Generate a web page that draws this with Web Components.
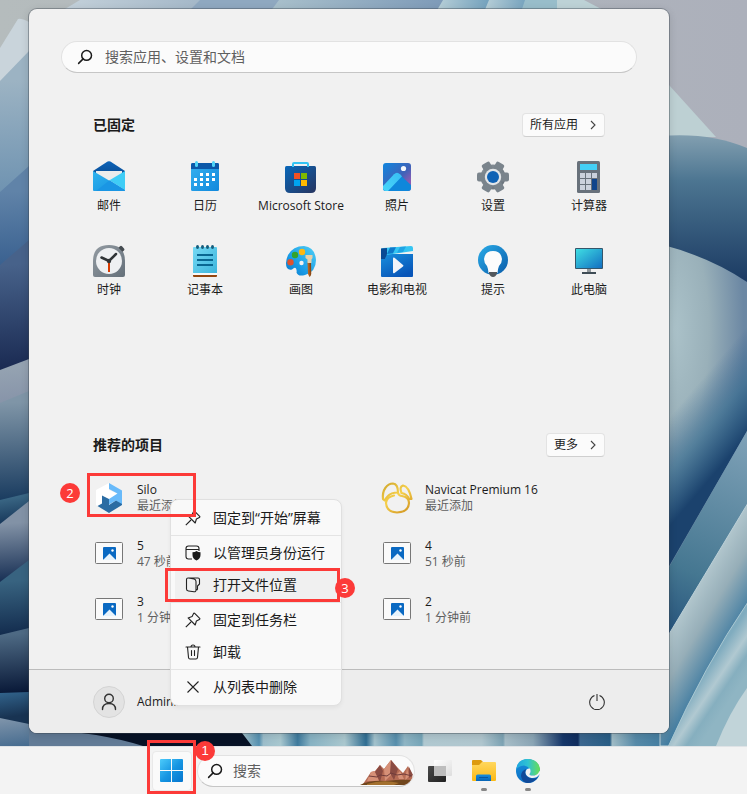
<!DOCTYPE html>
<html lang="zh-CN">
<head>
<meta charset="utf-8">
<meta name="viewport" content="width=device-width, initial-scale=1">
<title>开始</title>
<style>
  body {
    margin: 0;
    font-family: "Open Sans", "Noto Sans CJK SC", sans-serif;
    font-size: 12px;
    line-height: 16px;
    color: #1b1b1b;
  }
</style>
</head>
<body>
<desktop-shell>
  <wall-paper slot="wallpaper"></wall-paper>

  <start-menu>
    <search-box slot="search" label="搜索应用、设置和文档"></search-box>

    <menu-section slot="pinned" heading="已固定" more="所有应用">
      <app-tile icon="mail">邮件</app-tile>
      <app-tile icon="calendar">日历</app-tile>
      <app-tile icon="store">Microsoft Store</app-tile>
      <app-tile icon="photos">照片</app-tile>
      <app-tile icon="settings">设置</app-tile>
      <app-tile icon="calculator">计算器</app-tile>
      <app-tile icon="clock">时钟</app-tile>
      <app-tile icon="notepad">记事本</app-tile>
      <app-tile icon="paint">画图</app-tile>
      <app-tile icon="movies">电影和电视</app-tile>
      <app-tile icon="tips">提示</app-tile>
      <app-tile icon="pc">此电脑</app-tile>
    </menu-section>

    <menu-section slot="recommended" heading="推荐的项目" more="更多" wide>
      <recent-item icon="silo" name="Silo" detail="最近添加">
        <context-menu>
          <menu-item icon="pin">固定到“开始”屏幕</menu-item>
          <hr>
          <menu-item icon="shield">以管理员身份运行</menu-item>
          <menu-item icon="folderOpen" active>打开文件位置<step-mark slot="mark" number="3"></step-mark></menu-item>
          <hr>
          <menu-item icon="pin">固定到任务栏</menu-item>
          <menu-item icon="trash">卸载</menu-item>
          <hr>
          <menu-item icon="close">从列表中删除</menu-item>
        </context-menu>
        <step-mark number="2"></step-mark>
      </recent-item>
      <recent-item icon="navicat" name="Navicat Premium 16" detail="最近添加"></recent-item>
      <recent-item icon="image" name="5" detail="47 秒前"></recent-item>
      <recent-item icon="image" name="4" detail="51 秒前"></recent-item>
      <recent-item icon="image" name="3" detail="1 分钟前"></recent-item>
      <recent-item icon="image" name="2" detail="1 分钟前"></recent-item>
    </menu-section>

    <user-bar slot="footer" name="Administrator"></user-bar>
  </start-menu>

  <task-bar slot="taskbar"></task-bar>
</desktop-shell>

<script>
const icons = {
  search: `<svg viewBox="0 0 16 16" fill="none" stroke="#1b1b1b" stroke-width="1.5" stroke-linecap="round"><circle cx="9.6" cy="6.4" r="4.9"/><path d="M6.1 9.9 1.6 14.4"/></svg>`,
  chevron: `<svg viewBox="0 0 8 10" fill="none" stroke="#444" stroke-width="1.1"><path d="M2 1l4 4-4 4"/></svg>`,
  mail: `<svg viewBox="0 0 32 32"><defs>
    <linearGradient id="a" x2="0" y2="1"><stop stop-color="#0d63b8"/><stop offset="1" stop-color="#094a91"/></linearGradient>
    <linearGradient id="b" x2="1" y2="1"><stop stop-color="#2fb3ee"/><stop offset="1" stop-color="#1490df"/></linearGradient></defs>
    <path d="M0 10 14.6.6q1.4-.9 2.8 0L32 10v6H0z" fill="url(#a)"/>
    <path d="M3 10h26v3l-13 9L3 13z" fill="#ececec"/>
    <path d="M0 10l32 19q0 1-1 1H1q-1 0-1-1z" fill="url(#b)"/>
    <path d="M32 10v19L16.500 19.200z" fill="#3fcdf6"/><path d="M32 29 16.500 19.200 3 30h28q1 0 1-1z" fill="#1a96e4"/></svg>`,
  calendar: `<svg viewBox="0 0 32 32"><defs><linearGradient id="a" x2="1" y2="1"><stop stop-color="#35b1f0"/><stop offset="1" stop-color="#1188dc"/></linearGradient></defs>
    <rect x="2" y="2" width="28" height="28" rx="1.500" fill="url(#a)"/><path d="M3.500 2h25Q30 2 30 3.500V8H2V3.500Q2 2 3.500 2z" fill="#0c58a8"/>
    <rect x="6" y="0" width="3" height="6" rx="1.500" fill="#4fd3f7"/><rect x="23" y="0" width="3" height="6" rx="1.500" fill="#4fd3f7"/>
    <g fill="#fff"><path d="M11 12h3v3h-3zm6 0h3v3h-3zm6 0h3v3h-3zM5 17h3v3H5zm6 0h3v3h-3zm6 0h3v3h-3zm6 0h3v3h-3zM5 22h3v3H5zm6 0h3v3h-3zm6 0h3v3h-3z"/></g></svg>`,
  store: `<svg viewBox="0 0 32 32"><defs><linearGradient id="a" x2="1" y2="1"><stop stop-color="#0867b9"/><stop offset="1" stop-color="#27345f"/></linearGradient></defs>
    <path d="M0 6.500Q0 5 1.500 5h28Q31 5 31 6.500V27q0 5-5 5H5q-5 0-5-5z" fill="url(#a)"/>
    <path d="M8 6V3q0-1 1-1h13q1 0 1 1v3" fill="none" stroke="#33c4f3" stroke-width="2"/>
    <path d="M9 12h6v6H9z" fill="#f25022"/><path d="M16 12h6v6h-6z" fill="#7fba00"/><path d="M9 19h6v6H9z" fill="#00a4ef"/><path d="M16 19h6v6h-6z" fill="#ffb900"/></svg>`,
  photos: `<svg viewBox="0 0 32 32"><defs><linearGradient id="a" x2="1" y2="1"><stop stop-color="#0f86df"/><stop offset=".55" stop-color="#3f62b8"/><stop offset=".8" stop-color="#8a5cb4"/></linearGradient>
    <linearGradient id="b" x1="1" x2="0" y2="1"><stop stop-color="#37bdf3"/><stop offset="1" stop-color="#48d6fa"/></linearGradient><clipPath id="c"><rect x="2" y="2" width="28" height="28" rx="3"/></clipPath></defs>
    <g clip-path="url(#c)"><path fill="url(#a)" d="M2 2h28v28H2z"/><path d="M2 27 14 13q2-2 4 0l13 12v6H2z" fill="#0f87db"/><path d="M2 25 13 13.200q3-3 6 0l2 2L7 30H2z" fill="url(#b)"/></g><circle cx="22.500" cy="7.500" r="2.600" fill="#f4f7fc"/></svg>`,
  settings: `<svg viewBox="0 0 32 32"><defs><linearGradient id="a" gradientUnits="userSpaceOnUse" x1="0" y1="0" x2="32" y2="32"><stop stop-color="#8f989f"/><stop offset="1" stop-color="#626c75"/></linearGradient></defs>
    <circle cx="16" cy="16" r="12.500" fill="url(#a)"/><g fill="#7a848c"><rect y="11.500" width="32" height="9" rx="2"/><rect y="11.500" width="32" height="9" rx="2" transform="rotate(60 16 16)"/><rect y="11.500" width="32" height="9" rx="2" transform="rotate(120 16 16)"/></g>
    <circle cx="16" cy="16" r="8.200" fill="#e2e5e8"/><circle cx="16" cy="16" r="6" fill="#1063b5"/></svg>`,
  calculator: `<svg viewBox="0 0 32 32"><rect x="4" width="23" height="32" rx="1.500" fill="#68717b"/><rect x="7" y="3" width="17" height="6" fill="#44cff5"/>
    <path fill="#cbd1dc" d="M7 12h5v5H7zm6 0h5v5h-5zm6 0h5v5h-5zM7 18h5v5H7zm6 0h5v5h-5zM7 24h5v5H7zm6 0h5v5h-5z"/><path fill="#0f448b" d="M19 18h5v11h-5z"/></svg>`,
  clock: `<svg viewBox="0 0 32 32"><defs><linearGradient id="a" x2="1" y2="1"><stop stop-color="#939ba2"/><stop offset="1" stop-color="#65707a"/></linearGradient></defs>
    <path d="M0 16Q0 0 16 0t16 16v14q0 2-2 2H2q-2 0-2-2z" fill="url(#a)"/><path d="M27 1.200q1-1 2 0l2 2.300q1 1.200 0 2l-1.500 1.300-4-4z" fill="#454b50"/>
    <circle cx="16" cy="16" r="13" fill="#eef0f2"/><path d="M8.500 12.500 16 16l7-7" fill="none" stroke="#303437" stroke-width="2.500" stroke-linecap="round"/><path d="M15 17h2v10h-2z" fill="#d83b01"/><circle cx="16" cy="16" r="2.200" fill="#303437"/></svg>`,
  notepad: `<svg viewBox="0 0 32 32"><defs><linearGradient id="a" x2="1" y2="1"><stop stop-color="#76d9f4"/><stop offset="1" stop-color="#3db5dc"/></linearGradient></defs>
    <path d="M4 28h24v3q0 1-1 1H5q-1 0-1-1z" fill="#93460f"/><path d="M4 28h24v2H4z" fill="#f9f9f9"/><path d="M4 3q0-1 1-1h22q1 0 1 1v25H4z" fill="url(#a)"/>
    <path d="M8 10h16M8 15h16M8 20h16" stroke="#096792" stroke-width="2"/><g fill="#155d7c"><ellipse cx="8.500" cy="2" rx="1.500" ry="2"/><ellipse cx="13.500" cy="2" rx="1.500" ry="2"/><ellipse cx="18.500" cy="2" rx="1.500" ry="2"/><ellipse cx="23.500" cy="2" rx="1.500" ry="2"/></g></svg>`,
  paint: `<svg viewBox="0 0 32 32"><defs><linearGradient id="a" x1="1" x2="0" y2="1"><stop stop-color="#51d0f5"/><stop offset=".6" stop-color="#1a9de7"/><stop offset="1" stop-color="#0877c9"/></linearGradient></defs>
    <path d="M19 1Q8 1 3 10-.5 18 2 23q2 2.500 5 1.500 3-3 4-1 1 2 .5 4Q13 32 20 30q11-3 11-15Q30 2 19 1z" fill="url(#a)"/><circle cx="16.500" cy="18" r="2.200" fill="#f1f1f1"/>
    <circle cx="5.500" cy="17.300" r="3.200" fill="#e0522e"/><circle cx="10" cy="10" r="3.200" fill="#34a32c"/><circle cx="17" cy="7" r="3.200" fill="#fdb813"/>
    <path d="M22.500 17h3.500l.3 12-1.800 3-1.500-3z" fill="#b4631f"/><path d="M24.500 17h1.500l-.2 13-1 2z" fill="#854514"/><path d="M20.500 10h7v3l-1 1.500V18h-4v-3.500l-2-1.500z" fill="#e7d1ac"/></svg>`,
  movies: `<svg viewBox="0 0 32 32"><defs><linearGradient id="a" x2=".6" y2="1"><stop stop-color="#198fdd"/><stop offset="1" stop-color="#0855b8"/></linearGradient></defs>
    <path d="M0 9h32v22q0 1-1 1H1q-1 0-1-1z" fill="url(#a)"/><path d="M0 4.500Q0 3 2 3l28-2q2 0 2 2v3L5 10l-1 4H0z" fill="#35c5f2"/><path d="M0 3.500 6 3v6l-2 5H0z" fill="#0a4a94"/><path d="M9 2.600 15 2.200 12 8.200 6 9z" fill="#0f79cb"/><path d="M19 1.900 25 1.500 22 7 16 7.800z" fill="#1fa4e5"/>
    <path d="M12 13.500q0-1.500 1.500-.7L22 20q1 .8 0 1.600L13.500 28q-1.500.8-1.500-.7z" fill="#f1f4f9"/></svg>`,
  tips: `<svg viewBox="0 0 32 32"><defs><linearGradient id="a" x2="1" y2="1"><stop stop-color="#2aace8"/><stop offset="1" stop-color="#0a5ba9"/></linearGradient></defs>
    <circle cx="16" cy="15" r="15" fill="url(#a)"/><path d="M16 6q8 0 9 8 0 4-3 7-1 2-1.500 7h-9Q11 23 10 21q-3-3-3-7 1-8 9-8z" fill="#fcfcfc"/><path d="M12 27h8v1q-1 4-4 4t-4-4z" fill="#53585d"/></svg>`,
  pc: `<svg viewBox="0 0 32 32"><defs><linearGradient id="a" x2="1" y2="1"><stop stop-color="#3fdee3"/><stop offset="1" stop-color="#126fc2"/></linearGradient></defs>
    <rect x="2" y="3" width="28" height="21" rx="1" fill="#35566b"/><path fill="url(#a)" d="M3 4h26v19H3z"/><path d="M14 24h4v3h-4z" fill="#91989c"/><path d="M9 27h14v2H9z" fill="#3f4c55"/></svg>`,
  silo: `<svg viewBox="0 0 32 32"><path d="M3 8 16 1v7l9 4-9 6-7-4v8l-4 2.500L3 23z" fill="#fff"/><path d="M16 1l13 7.500V23l-6-4.500-7 4V17l8.500-5.500L16 7z" fill="#68bafa"/><path d="M16 1v6l-4 2 2 4z" fill="#fff"/><path d="M9 13.500l7 3.500v6l7-4.500 6 3.500v1L16 31 4.500 24 9 21.500z" fill="#2b6ca3"/></svg>`,
  navicat: `<svg viewBox="0 0 32 32"><defs><linearGradient id="a" gradientUnits="userSpaceOnUse" x1="4" y1="0" x2="28" y2="32"><stop stop-color="#cfa62c"/><stop offset=".45" stop-color="#f6d04b"/><stop offset="1" stop-color="#cf9220"/></linearGradient></defs>
    <g fill="none" stroke="url(#a)" stroke-width="2.200" stroke-linecap="round" stroke-linejoin="round"><path d="M2 17C1 8 6 1.500 12 1.500q5 .5 5 9-7 0-10 3.500-2 2-3 4.500z"/><path d="M20.500 11Q18 5 22 3.500q6 1 8.500 13.500h-2.300Q26 12 20.500 11z"/><path d="M17 11q1 3 4 3 7 1 7 7-.5 9-12 9.500Q5.500 30 5 21q.5-6 8-7.500"/></g></svg>`,
  image: `<svg viewBox="0 0 32 32"><rect x="2.500" y="4.500" width="27" height="21" rx="1" fill="#fafafa" stroke="#777"/><rect x="10" y="9" width="13" height="13" rx="1" fill="#0a69c2"/><path d="M10 22l6.500-6.500L23 22z" fill="#e7f3fc"/><circle cx="19.500" cy="12.500" r="1.200" fill="#fff"/></svg>`,
  pin: `<svg viewBox="0 0 16 16" fill="none" stroke="#222" stroke-width="1.100" stroke-linejoin="round"><path d="M9.700 1.300l5 5q.5.700-.3 1.100l-3 1.600-1.200 4L3.100 5.900l4-1.300 1.500-3q.5-.8 1.100-.3zM6 10l-5.200 5.200"/></svg>`,
  shield: `<svg viewBox="0 0 16 16" fill="none" stroke="#222" stroke-width="1.100"><path d="M7 14H3.500Q1 14 1 11.500v-8Q1 1 3.500 1h8Q14 1 14 3.500V6M1 4.500h13"/><path d="M11.500 6q1.500 1.200 4 1.300V10q0 3.500-4 5.500-4-2-4-5.500V7.300Q10 7.200 11.500 6z" fill="#1b1b1b" stroke="none"/></svg>`,
  folderOpen: `<svg viewBox="0 0 16 16" fill="none" stroke="#222" stroke-width="1.100" stroke-linejoin="round"><path d="M3.500 1 9 2q2 .5 2 2.500v8.500q0 2-2 1.800l-5.500-.8Q1.500 13.800 1.500 12V2.500Q1.500 1 3 1h10q1.500 0 1.500 1.500V7L12.500 9v3q0 1-1.500 1"/></svg>`,
  trash: `<svg viewBox="0 0 16 16" fill="none" stroke="#222" stroke-width="1.100" stroke-linecap="round"><path d="M1 3h14M2.500 3l1 10.500q.2 1.500 1.500 1.500h6q1.300 0 1.500-1.500l1-10.500M6 3q0-2 2-2t2 2M6.500 6.500v5M9.500 6.500v5"/></svg>`,
  close: `<svg viewBox="0 0 16 16" fill="none" stroke="#222" stroke-width="1.100"><path d="M2.500 2.500l11 11M13.500 2.500l-11 11"/></svg>`,
  person: `<svg viewBox="0 0 20 20" fill="none" stroke="#333" stroke-width="1.400" stroke-linecap="round"><circle cx="10" cy="6.500" r="4.300"/><path d="M3.500 17.500q0-6 6.500-6t6.500 6"/></svg>`,
  power: `<svg viewBox="0 0 16 16" fill="none" stroke="#333" stroke-width="1.100"><path d="M5.500 1.500a7.300 7.300 0 1 0 5 0M8 0v7"/></svg>`,
  windows: `<svg viewBox="0 0 24 24"><defs><linearGradient id="a" gradientUnits="userSpaceOnUse" x1="0" y1="0" x2="24" y2="24"><stop stop-color="#4ccbfb"/><stop offset=".5" stop-color="#1695e2"/><stop offset="1" stop-color="#0472cc"/></linearGradient></defs>
    <path fill="url(#a)" d="M1 0h10v11H0V1q0-1 1-1zm11 0h10q1 0 1 1v10H12zM0 12h11v11H1q-1 0-1-1zm12 0h11v10q0 1-1 1H12z"/></svg>`,
  taskview: `<svg viewBox="0 0 24 24"><defs><linearGradient id="a" x2="1" y2="1"><stop stop-color="#4a4a4a"/><stop offset="1" stop-color="#202020"/></linearGradient><linearGradient id="b" x2="1" y2="1"><stop stop-color="#fff"/><stop offset="1" stop-color="#ddd"/></linearGradient></defs>
    <rect y="7" width="18" height="16" rx="1" fill="url(#a)"/><rect x="6" y="1" width="18" height="16" rx="1" fill="url(#b)"/><path d="M6 7h12v10H6z" fill="#bdbdbd"/></svg>`,
  explorer: `<svg viewBox="0 0 24 24"><defs><linearGradient id="a" x2="0" y2="1"><stop stop-color="#ffd75e"/><stop offset="1" stop-color="#fbb914"/></linearGradient><linearGradient id="b" x2="0" y2="1"><stop stop-color="#168ede"/><stop offset="1" stop-color="#0764b5"/></linearGradient></defs>
    <path d="M0 2q0-1 1-1h8l2 2v4H0z" fill="#dd9a0d"/><path d="M0 6h7l3-3h13q1 0 1 1v17q0 1-1 1H1q-1 0-1-1z" fill="url(#a)"/><path d="M4 22v-5q0-1.500 1.500-1.500h12q1.500 0 1.500 1.500v5z" fill="url(#b)"/><path d="M7 18.500h9" stroke="#0a579f"/></svg>`,
  edge: `<svg viewBox="0 0 24 24"><defs><linearGradient id="a" y1=".3" x2="1" y2=".3"><stop stop-color="#1ea5e0"/><stop offset=".5" stop-color="#2fc3d2"/><stop offset="1" stop-color="#6ade52"/></linearGradient><linearGradient id="b" x2="0" y2="1"><stop stop-color="#178fdc"/><stop offset="1" stop-color="#0b6fc4"/></linearGradient></defs>
    <circle cx="12" cy="12" r="12" fill="url(#b)"/><path d="M0 11Q1 0 12 0q11 1 12 10 0 6-6 6.500-5 .5-4.500-1.500 2-2 .5-5Q12 7 8 6.500 2 7 0 11z" fill="url(#a)"/><path d="M22 18q-4 6-11 6-5-1-6-7 0-5 5-7-2 5 2 8 5 3 10 0z" fill="#114a99"/><path d="M14 9.500q-4-.5-4.500 4 .3 4.300 6 5.500 5 .5 8-3.500l1-1-1-3q-1 4-5 5-5 .5-5-1.500 2-2 .5-5.500z" fill="#f3f3f3"/></svg>`,
  desert: `<svg viewBox="0 0 54 26"><path d="M3 24 11 12l4-1 5-6 4 4 7-9 7 8 5 5 5-7 4 8 1 6-6 5z" fill="#b66c55"/><path d="M11 12l4-1 4 10H7zM24 9l7-9 1 14-7 7zM37 14l3-3 4 8h-5zM47 8l2 8-4 5z" fill="#d69077"/><path d="M15 12l5-7 3 6-3 11zM31 0l7 9-4 11-4-7zM49 7l4 8-4 3z" fill="#8a4b42"/><path d="M9 16l8 1 3-2 7 1 4-3 6 2 7-1 8 2" fill="none" stroke="#713d3b"/><path d="M0 25q10-5 25-4 18-2 28-1l-5 5H0z" fill="#70461d"/><path d="M7 24q16-5 32-1l-5 2H7z" fill="#a3702e"/></svg>`
};

class AppIcon extends HTMLElement {
  connectedCallback() {
    this.attachShadow({ mode: 'open' });
    this.shadowRoot.innerHTML = `
      <style>
        :host { display: block; flex: none; width: 32px; height: 32px; }
        svg { display: block; width: 100%; height: 100%; }
      </style>
      ${icons[this.getAttribute('name')].replace('<svg', '<svg aria-hidden="true"')}
    `;
  }
}

class DesktopShell extends HTMLElement {
  connectedCallback() {
    this.attachShadow({ mode: 'open' });
    this.shadowRoot.innerHTML = `
      <style>
        :host { display: flex; flex-direction: column; min-height: 100vh; }
        main { display: grid; flex: 1; grid-template: minmax(0, 1fr) / minmax(0, 1fr); }
        slot[name="wallpaper"]::slotted(*) { grid-area: 1 / 1; }
        .area { grid-area: 1 / 1; padding: 9px 29px 13px; position: relative; }
      </style>
      <main>
        <slot name="wallpaper"></slot>
        <div class="area"><slot></slot></div>
      </main>
      <slot name="taskbar"></slot>
    `;
  }
}

// [left y, right y, start colour, end colour] for the folds on the left
const folds = [
  [81, 51, '#9cb3c3', '#6f93b1'],
  [192, 166, '#6083a8', '#3a6190'], [265, 240, '#47628a', '#1a2a52'],
  [370, 359, '#94a2b1', '#8794a9'], [403, 391, '#7f95a7', '#1a3c60'],
  [500, 493, '#396583', '#17375a'], [524, 501, '#8292a6', '#172f54'],
  [582, 560, '#386380', '#132c4e'], [635, 628, '#4e6a84', '#091938'],
  [693, 692, '#31628a', '#183352'], [718, 724, '#8095ab', '#446a8e']
];

class WallPaper extends HTMLElement {
  connectedCallback() {
    this.attachShadow({ mode: 'open' });
    const left = folds.map(([l, r, from, to], i) => {
      const end = folds[i + 1] ? folds[i + 1][0] : 750;
      return `<linearGradient id="f${i}" gradientUnits="userSpaceOnUse" x1="0" y1="${l}" x2="4" y2="${end}"><stop stop-color="${from}"/><stop offset="1" stop-color="${to}"/></linearGradient>
        <path d="M0 ${l} 29 ${r} 60 ${r} 60 760 0 760z" fill="url(#f${i})"/>`;
    }).join('');
    this.shadowRoot.innerHTML = `
      <style>
        :host { display: block; overflow: hidden; contain: size; background: #b3babd; }
        svg { display: block; width: 100%; height: 100%; }
      </style>
      <svg viewBox="0 0 747 746" preserveAspectRatio="xMinYMin slice" aria-hidden="true">
        <defs>
          <linearGradient id="sky"><stop stop-color="#b5bcbd"/><stop offset="1" stop-color="#acb0bb"/></linearGradient>
          <linearGradient id="t1"><stop stop-color="#c4d1da"/><stop offset="1" stop-color="#a2b6c7"/></linearGradient>
          <linearGradient id="t2"><stop stop-color="#a9c0cb"/><stop offset="1" stop-color="#7b98b7"/></linearGradient>
          <linearGradient id="t3"><stop stop-color="#b9d0d8"/><stop offset="1" stop-color="#6799b8"/></linearGradient>
          <linearGradient id="arch" x2="0" y2="1"><stop stop-color="#829fb0"/><stop offset=".3" stop-color="#4c7591"/><stop offset="1" stop-color="#183760"/></linearGradient>
          <radialGradient id="bowl" gradientUnits="userSpaceOnUse" cx="674" cy="330" r="70" gradientTransform="translate(674 330) scale(1 3) translate(-674 -330)"><stop stop-color="#abc2c9"/><stop offset=".5" stop-color="#99b0b9"/><stop offset="1" stop-color="#6b87a3"/></radialGradient>
          <linearGradient id="deep" gradientUnits="userSpaceOnUse" x1="650" y1="440" x2="704" y2="486"><stop stop-color="#27588a" stop-opacity="0"/><stop offset=".5" stop-color="#2f678c" stop-opacity=".6"/><stop offset="1" stop-color="#1b426d"/></linearGradient>
          <linearGradient id="s1" gradientUnits="userSpaceOnUse" x1="747" y1="440" x2="669" y2="630"><stop stop-color="#7da0b6"/><stop offset=".7" stop-color="#457791"/><stop offset="1" stop-color="#28557d"/></linearGradient>
          <linearGradient id="s2" gradientUnits="userSpaceOnUse" x1="690" y1="600" x2="740" y2="630"><stop stop-color="#b0c5cc"/><stop offset=".4" stop-color="#96aeb8"/><stop offset="1" stop-color="#3a789f"/></linearGradient>
          <linearGradient id="s3" gradientUnits="userSpaceOnUse" x1="700" y1="680" x2="730" y2="700"><stop stop-color="#80acbf"/><stop offset=".4" stop-color="#b1c9d1"/><stop offset=".7" stop-color="#86afbf"/><stop offset="1" stop-color="#8fb5c3"/></linearGradient>
          <linearGradient id="base" gradientUnits="userSpaceOnUse" x1="242" y1="0" x2="670" y2="0">
            <stop stop-color="#a7c5cd"/><stop offset=".04" stop-color="#5590b0"/><stop offset=".05" stop-color="#9cbdca"/><stop offset=".09" stop-color="#a8c7cf"/><stop offset=".13" stop-color="#3e7a9d"/><stop offset=".16" stop-color="#87b2c3"/><stop offset=".24" stop-color="#aac7ce"/><stop offset=".29" stop-color="#2f6d92"/><stop offset=".31" stop-color="#a3c2cc"/><stop offset=".36" stop-color="#568eac"/><stop offset=".38" stop-color="#8fb5c4"/><stop offset=".42" stop-color="#76a5b8"/><stop offset=".425" stop-color="#b0c8d0"/><stop offset=".56" stop-color="#b0c6ce"/><stop offset=".61" stop-color="#7ca2b3"/><stop offset=".615" stop-color="#a6bdc7"/><stop offset=".68" stop-color="#8aa5b5"/><stop offset=".75" stop-color="#16376a"/><stop offset=".785" stop-color="#102d5e"/><stop offset=".79" stop-color="#3c678f"/><stop offset=".86" stop-color="#285d85"/><stop offset=".865" stop-color="#9fbbc5"/><stop offset=".92" stop-color="#568aa8"/><stop offset="1" stop-color="#3f7a9f"/>
          </linearGradient>
        </defs>
        <path fill="url(#sky)" d="M0 0h747v746H0z"/>
        <path fill="#c9d4db" d="M0 48 18 19q3-1 11 3v60H0z"/>
        <path fill="url(#t1)" d="M60 12 80 0h130v12z"/><path fill="#8fa8c0" d="M188 12 200 0h82v12z"/>
        <path fill="url(#t2)" d="M270 12 279 0h175v12z"/><path fill="url(#t3)" d="M436 12 443 0h55v12z"/>
        <path fill="url(#t3)" d="M484 12 489 0h46v12z"/><path fill="#98bdca" d="M521 12 525 0h40v12z"/><path fill="#bdd2d6" d="M557 12V0h27l23 12z"/>
        ${left}
        <path fill="#bdd0d3" d="M660 76 669 85 716 137H660z"/>
        <path fill="url(#arch)" d="M660 136q50-4 87 12v140H660z"/>
        <path fill="url(#bowl)" d="M660 244q50 13 87 38v250l-87 60z"/>
        <path fill="url(#deep)" d="M660 360 747 300v131L660 582z"/>
        <path fill="url(#s1)" d="M747 431v90L660 660v-77z"/>
        <path fill="url(#base)" d="M240 733h520v13H252z"/>
        <path fill="url(#s2)" stroke="#bdd0d7" d="M748 503 660 649v97h88z"/>
        <path fill="url(#s3)" stroke="#a9c7d1" d="M748 602Q705 665 668 747h80z"/>
        <path fill="#c1d4d9" d="M747 688q-18 25-31 58h31z"/>
        <path fill="#071226" d="M60 733h182l10 13H60z"/>
        <path fill="#627b96" d="M29 728q70 4 114 18H29z"/>
      </svg>
    `;
  }
}

class StartMenu extends HTMLElement {
  connectedCallback() {
    this.attachShadow({ mode: 'open' });
    this.shadowRoot.innerHTML = `
      <style>
        :host {
          display: block;
          box-sizing: border-box;
          max-width: 640px;
          border-radius: 8px;
          background: #f1f1f1;
          box-shadow: 0 0 0 1px rgba(60, 70, 80, 0.4), 0 2px 8px rgba(0, 0, 0, 0.15);
        }
        .body { padding: 32px 32px 31px; }
        .pinned { margin-top: 40px; min-height: 290px; }
        .recommended { margin-top: 30px; }
      </style>
      <div class="body">
        <slot name="search"></slot>
        <div class="pinned"><slot name="pinned"></slot></div>
        <div class="recommended"><slot name="recommended"></slot></div>
      </div>
      <slot name="footer"></slot>
    `;
  }
}

class SearchBox extends HTMLElement {
  connectedCallback() {
    this.attachShadow({ mode: 'open' });
    this.shadowRoot.innerHTML = `
      <style>
        :host { display: block; }
        label {
          display: flex;
          align-items: center;
          gap: 12px;
          box-sizing: border-box;
          height: 32px;
          padding: 0 15px;
          border: 1px solid #e2e2e2;
          border-bottom-color: #c6c6c6;
          border-radius: 16px;
          background: #fbfbfb;
        }
        :host([compact]) label { gap: 10px; padding: 0 0 0 9px; overflow: hidden; }
        app-icon { width: 16px; height: 16px; }
        input {
          flex: 1;
          min-width: 0;
          padding: 0;
          border: 0;
          outline: 0;
          background: none;
          font: inherit;
          font-size: 14px;
          line-height: 20px;
          color: inherit;
        }
        input::placeholder { color: #5f5f5f; opacity: 1; }
      </style>
      <label>
        <app-icon name="search"></app-icon>
        <input type="text" placeholder="${this.getAttribute('label')}" aria-label="${this.getAttribute('label')}">
        <slot></slot>
      </label>
    `;
  }
}

class MenuSection extends HTMLElement {
  connectedCallback() {
    this.attachShadow({ mode: 'open' });
    this.shadowRoot.innerHTML = `
      <style>
        :host { display: block; }
        header { display: flex; align-items: center; justify-content: space-between; padding: 0 32px; }
        h2 { margin: 0; font-size: 14px; line-height: 20px; font-weight: 600; }
        button {
          display: flex;
          align-items: center;
          gap: 11px;
          box-sizing: border-box;
          height: 24px;
          padding: 0 7px;
          border: 1px solid #e3e3e3;
          border-bottom-color: #cfcfcf;
          border-radius: 4px;
          background: #fbfbfb;
          font: inherit;
          color: inherit;
        }
        button app-icon { width: 8px; height: 10px; }
        .grid { display: grid; grid-template-columns: repeat(6, minmax(0, 1fr)); margin-top: 14px; }
        :host([wide]) .grid { grid-template-columns: repeat(2, minmax(0, 1fr)); margin-top: 13px; }
      </style>
      <header>
        <h2>${this.getAttribute('heading')}</h2>
        <button type="button">${this.getAttribute('more')}<app-icon name="chevron"></app-icon></button>
      </header>
      <div class="grid"><slot></slot></div>
    `;
  }
}

class AppTile extends HTMLElement {
  connectedCallback() {
    this.attachShadow({ mode: 'open' });
    this.shadowRoot.innerHTML = `
      <style>
        :host { display: block; }
        button {
          display: flex;
          flex-direction: column;
          align-items: center;
          gap: 5px;
          width: 100%;
          height: 84px;
          padding: 10px 0 0;
          border: 0;
          background: none;
          font: inherit;
          color: inherit;
          white-space: nowrap;
        }
      </style>
      <button type="button"><app-icon name="${this.getAttribute('icon')}"></app-icon><span><slot></slot></span></button>
    `;
  }
}

class RecentItem extends HTMLElement {
  connectedCallback() {
    this.attachShadow({ mode: 'open' });
    this.shadowRoot.innerHTML = `
      <style>
        :host { display: block; position: relative; }
        button {
          display: flex;
          align-items: center;
          gap: 12px;
          width: 100%;
          height: 56px;
          padding: 0 32px;
          border: 0;
          background: none;
          font: inherit;
          color: inherit;
          text-align: left;
        }
        span { display: block; }
        .detail { color: #5f5f5f; }
        ::slotted(context-menu) { position: absolute; top: 29px; left: 109px; z-index: 2; }
        ::slotted(step-mark) { top: 3px; left: 26px; width: 109px; height: 44px; z-index: 3; --badge-left: -27px; --badge-top: 10px; }
      </style>
      <button type="button">
        <app-icon name="${this.getAttribute('icon')}"></app-icon>
        <span><span>${this.getAttribute('name')}</span><span class="detail">${this.getAttribute('detail')}</span></span>
      </button>
      <slot></slot>
    `;
  }
}

class ContextMenu extends HTMLElement {
  connectedCallback() {
    this.attachShadow({ mode: 'open' });
    this.setAttribute('role', 'menu');
    this.shadowRoot.innerHTML = `
      <style>
        :host {
          display: block;
          box-sizing: border-box;
          width: 172px;
          padding: 2px 0;
          border: 1px solid #e0e0e0;
          border-radius: 8px;
          background: #f9f9f9;
          box-shadow: 0 2px 4px rgba(0, 0, 0, 0.05);
        }
        ::slotted(hr) { margin: 1px 0; border: 0; border-top: 1px solid #e4e4e4; }
      </style>
      <slot></slot>
    `;
  }
}

class MenuItem extends HTMLElement {
  connectedCallback() {
    this.attachShadow({ mode: 'open' });
    this.shadowRoot.innerHTML = `
      <style>
        :host { display: block; position: relative; padding: 0 4px; }
        button {
          display: flex;
          align-items: center;
          gap: 12px;
          width: 100%;
          height: 32px;
          padding: 0 0 0 10px;
          border: 0;
          border-radius: 4px;
          background: none;
          font: inherit;
          font-size: 14px;
          line-height: 20px;
          color: inherit;
          white-space: nowrap;
        }
        :host([active]) button { background: #f0f0f0; }
        app-icon { width: 16px; height: 16px; }
        ::slotted(step-mark) { top: -1px; left: -6px; right: 1px; height: 34px; --badge-left: 170px; --badge-top: 10px; }
      </style>
      <button type="button" role="menuitem"><app-icon name="${this.getAttribute('icon')}"></app-icon><span><slot></slot></span></button>
      <slot name="mark"></slot>
    `;
  }
}

class StepMark extends HTMLElement {
  connectedCallback() {
    this.attachShadow({ mode: 'open' });
    this.shadowRoot.innerHTML = `
      <style>
        :host {
          display: block;
          position: absolute;
          box-sizing: border-box;
          border: 3px solid #fc3a38;
          pointer-events: none;
        }
        span {
          position: absolute;
          top: calc(var(--badge-top) - 3px);
          left: calc(var(--badge-left) - 3px);
          width: 20px;
          height: 20px;
          border-radius: 50%;
          background: #fc3a38;
          color: #fff;
          font-size: 13px;
          line-height: 20px;
          text-align: center;
        }
      </style>
      <span>${this.getAttribute('number')}</span>
    `;
  }
}

class UserBar extends HTMLElement {
  connectedCallback() {
    this.attachShadow({ mode: 'open' });
    this.shadowRoot.innerHTML = `
      <style>
        :host {
          display: flex;
          align-items: center;
          justify-content: space-between;
          box-sizing: border-box;
          height: 64px;
          padding: 0 64px;
          border-top: 1px solid #bcbcbc;
          border-radius: 0 0 8px 8px;
          background: #ededed;
        }
        button { display: flex; align-items: center; gap: 12px; padding: 0; border: 0; background: none; font: inherit; color: inherit; }
        .avatar {
          display: grid;
          place-items: center;
          box-sizing: border-box;
          width: 32px;
          height: 32px;
          border: 1px solid #d4d4d4;
          border-radius: 50%;
          background: #e3e3e3;
        }
        .avatar app-icon { width: 20px; height: 20px; }
        .power { width: 16px; }
        .power app-icon { width: 16px; height: 16px; }
      </style>
      <button type="button"><span class="avatar"><app-icon name="person"></app-icon></span>${this.getAttribute('name')}</button>
      <button type="button" class="power" aria-label="电源"><app-icon name="power"></app-icon></button>
    `;
  }
}

class TaskBar extends HTMLElement {
  connectedCallback() {
    this.attachShadow({ mode: 'open' });
    this.shadowRoot.innerHTML = `
      <style>
        :host {
          display: flex;
          align-items: center;
          box-sizing: border-box;
          height: 48px;
          padding-left: 152px;
          border-top: 1px solid #dfe3e6;
          background: #f3f3f3;
        }
        search-box { width: 218px; margin: 0 3px 0 5px; }
        search-box app-icon { width: 54px; height: 26px; align-self: flex-end; }
        button { display: grid; place-items: center; position: relative; width: 44px; height: 40px; padding: 0; border: 0; background: none; }
        button app-icon { width: 24px; height: 24px; }
        .start { width: 40px; border: 1px solid #e9e9e9; border-radius: 4px; background: #fafafa; }
        .running::after { content: ""; position: absolute; bottom: 0; width: 6px; height: 3px; border-radius: 2px; background: #868686; }
        step-mark { top: -12px; left: -6px; width: 49px; height: 54px; --badge-left: 48px; --badge-top: 1px; }
      </style>
      <button type="button" class="start" aria-label="开始"><app-icon name="windows"></app-icon><step-mark number="1"></step-mark></button>
      <search-box compact label="搜索"><app-icon name="desert"></app-icon></search-box>
      <button type="button" aria-label="任务视图"><app-icon name="taskview"></app-icon></button>
      <button type="button" class="running" aria-label="文件资源管理器"><app-icon name="explorer"></app-icon></button>
      <button type="button" class="running" aria-label="Microsoft Edge"><app-icon name="edge"></app-icon></button>
    `;
  }
}

customElements.define('app-icon', AppIcon);
customElements.define('desktop-shell', DesktopShell);
customElements.define('wall-paper', WallPaper);
customElements.define('start-menu', StartMenu);
customElements.define('search-box', SearchBox);
customElements.define('menu-section', MenuSection);
customElements.define('app-tile', AppTile);
customElements.define('recent-item', RecentItem);
customElements.define('context-menu', ContextMenu);
customElements.define('menu-item', MenuItem);
customElements.define('step-mark', StepMark);
customElements.define('user-bar', UserBar);
customElements.define('task-bar', TaskBar);
</script>
</body>
</html>
